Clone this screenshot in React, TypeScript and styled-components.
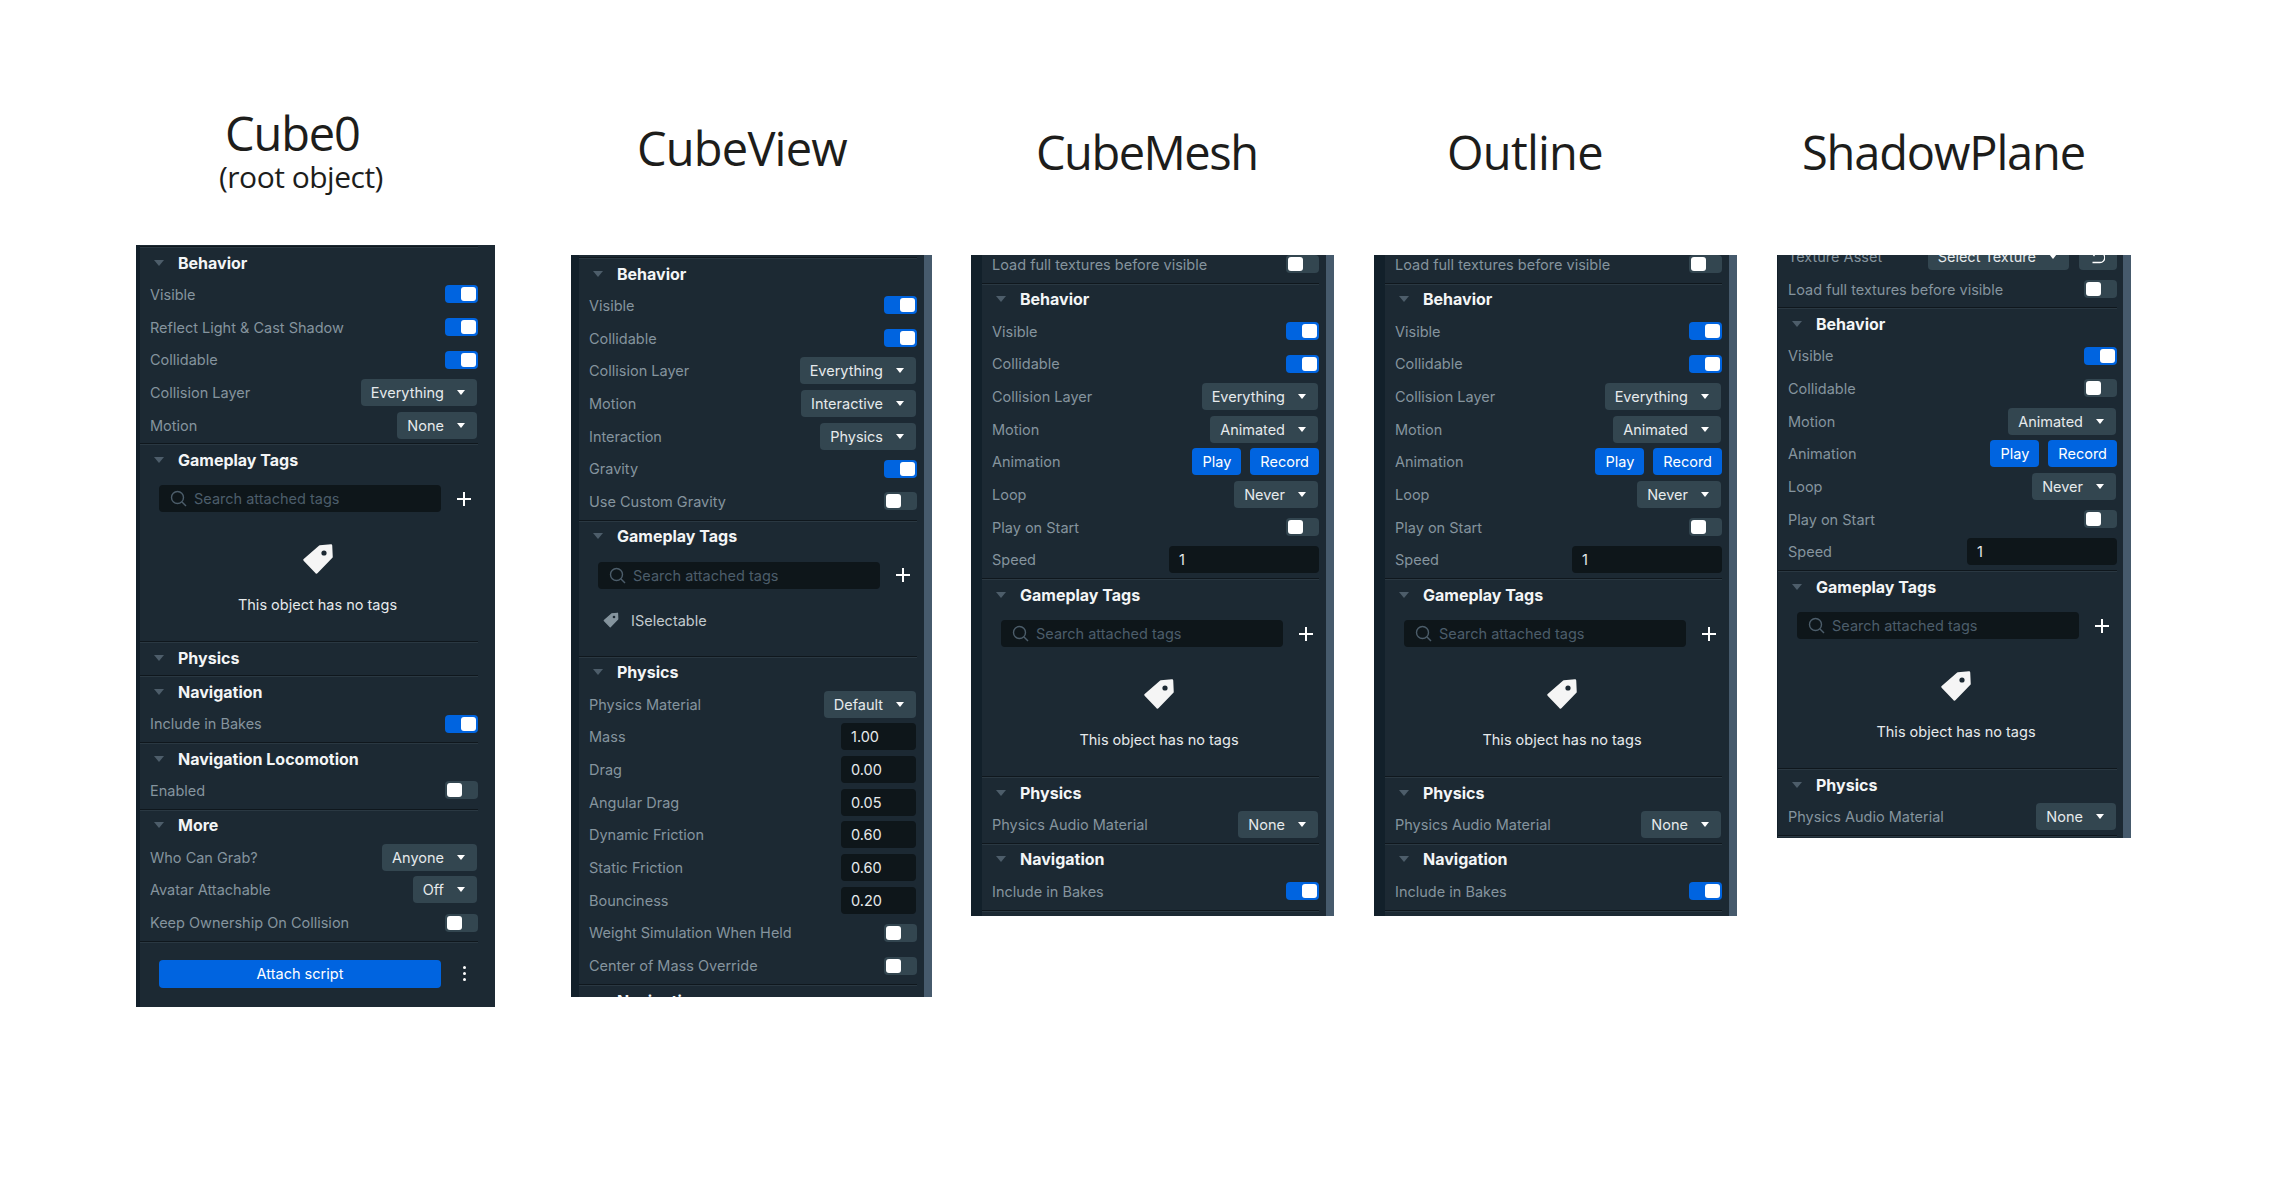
import React from "react";
import styled, { createGlobalStyle } from "styled-components";

const GlobalStyle = createGlobalStyle`
    html, body {
        margin: 0;
        background: #ffffff;
    }
    * {
        box-sizing: border-box;
    }
`;

const Page = styled.div`
    display: flex;
    align-items: flex-start;
    width: 2285px;
    height: 1191px;
    overflow: hidden;
    background: #ffffff;
    padding-left: 136px;
`;

const Column = styled.div<{ $width: number; $gap: number }>`
    width: ${(p) => p.$width}px;
    margin-left: ${(p) => p.$gap}px;
    flex: none;
`;

const TitleBlock = styled.header<{ $height: number; $top: number; $left: number }>`
    height: ${(p) => p.$height}px;
    padding-top: ${(p) => p.$top}px;
    padding-left: ${(p) => p.$left}px;
    font-family: "Open Sans", sans-serif;
    color: #1d1d1b;
    white-space: nowrap;
`;

const Title = styled.h1<{ $spacing: number }>`
    margin: 0;
    font-size: 47px;
    font-weight: 400;
    line-height: 60px;
    letter-spacing: ${(p) => p.$spacing}px;
`;

const SubTitle = styled.div`
    margin: -4px 0 0 -6px;
    font-size: 30px;
    line-height: 36px;
    letter-spacing: -0.5px;
`;

const Panel = styled.div<{ $height: number }>`
    display: flex;
    height: ${(p) => p.$height}px;
    overflow: hidden;
    background: #1c2933;
    font-family: Inter, "Liberation Sans", sans-serif;
`;

const Strip = styled.div<{ $width: number }>`
    flex: none;
    width: ${(p) => p.$width}px;
    background: #12202a;
`;

const Scrollbar = styled.div`
    flex: none;
    width: 8px;
    background: #465a6c;
`;

const Content = styled.div<{ $right: number; $scroll: number }>`
    flex: 1;
    min-width: 0;
    margin-top: ${(p) => p.$scroll}px;
    padding-right: ${(p) => p.$right}px;
`;

const Section = styled.section<{ $first?: boolean }>`
    padding: 0 0 2px 10px;
    border-top: ${(p) => (p.$first ? "0" : "1px solid #0f171d")};
    box-shadow: ${(p) => (p.$first ? "none" : "inset 0 1px 0 #2a3842")};
`;

const SectionHeader = styled.div`
    display: flex;
    align-items: center;
    height: 31px;
    padding-left: 4px;
    font-size: 16px;
    font-weight: 700;
    color: #f3f5f6;
`;

const Triangle = styled.span`
    width: 0;
    height: 0;
    margin-right: 14px;
    border-left: 5.5px solid transparent;
    border-right: 5.5px solid transparent;
    border-top: 6px solid #4d5d6a;
`;

const Row = styled.div`
    display: flex;
    align-items: center;
    justify-content: space-between;
    height: 32.7px;
    font-size: 14.5px;
    color: #85949e;
    white-space: nowrap;
`;

const ToggleTrack = styled.span<{ $on: boolean }>`
    display: flex;
    justify-content: ${(p) => (p.$on ? "flex-end" : "flex-start")};
    align-items: center;
    width: 33px;
    height: 18px;
    padding: 0 2px;
    border-radius: 4px;
    background: ${(p) => (p.$on ? "#0064e0" : "#334650")};
`;

const ToggleKnob = styled.span`
    width: 15px;
    height: 14px;
    border-radius: 3px;
    background: #ffffff;
`;

const SelectBox = styled.div`
    display: flex;
    align-items: center;
    height: 27px;
    margin-right: 1px;
    padding: 0 12px 0 10px;
    border-radius: 4px;
    background: #334650;
    color: #e6eaec;
`;

const Caret = styled.span`
    width: 0;
    height: 0;
    margin-left: 13px;
    border-left: 4px solid transparent;
    border-right: 4px solid transparent;
    border-top: 5px solid #ffffff;
`;

const NumberBox = styled.div<{ $width: number; $flush?: boolean }>`
    display: flex;
    align-items: center;
    width: ${(p) => p.$width}px;
    height: 27px;
    margin-right: ${(p) => (p.$flush ? 0 : 1)}px;
    padding-left: 10px;
    border-radius: 4px;
    background: #0e161a;
    color: #e6eaec;
`;

const ButtonPair = styled.div`
    display: flex;
    gap: 9px;
`;

const BlueButton = styled.div`
    display: flex;
    align-items: center;
    height: 27px;
    padding: 0 10px;
    border-radius: 4px;
    background: #0064e0;
    color: #ffffff;
`;

const IconBox = styled.div`
    display: flex;
    align-items: center;
    justify-content: center;
    width: 38px;
    height: 27px;
    border-radius: 4px;
    background: #334650;
    color: #ffffff;
`;

const RowControls = styled.div`
    display: flex;
    gap: 9px;
`;

const SearchRow = styled.div`
    display: flex;
    align-items: center;
    margin: 10px 0 0 9px;
`;

const SearchBox = styled.div`
    display: flex;
    align-items: center;
    gap: 7px;
    width: 282px;
    height: 27px;
    padding-left: 11px;
    border-radius: 4px;
    background: #0e161a;
    color: #4c5d6a;
    font-size: 14.5px;
`;

const PlusButton = styled.div`
    display: flex;
    margin-left: 15px;
    color: #ffffff;
`;

const EmptyTags = styled.div`
    display: flex;
    flex-direction: column;
    align-items: center;
    height: 127px;
    padding: 31px 0 0 7px;
    font-size: 14.5px;
    color: #e6eaec;
`;

const EmptyText = styled.div`
    margin-top: 21px;
    line-height: 18px;
`;

const TagRow = styled.div`
    display: flex;
    align-items: center;
    height: 65px;
    padding: 0 0 2px 14px;
    gap: 12px;
    font-size: 14.5px;
    color: #c2cace;
`;

const Footer = styled.div`
    display: flex;
    align-items: center;
    margin: 18px 0 0 9px;
`;

const AttachButton = styled.div`
    display: flex;
    align-items: center;
    justify-content: center;
    width: 282px;
    height: 28px;
    border-radius: 4px;
    background: #0064e0;
    color: #ffffff;
    font-size: 14.5px;
`;

const MoreDots = styled.div`
    display: flex;
    flex-direction: column;
    gap: 3px;
    margin-left: 22px;
    span {
        width: 3px;
        height: 3px;
        border-radius: 50%;
        background: #ffffff;
    }
`;

function SearchIcon() {
    return (
        <svg width="17" height="17" viewBox="0 0 17 17" fill="none" stroke="#4c5d6a" strokeWidth="1.4">
            <circle cx="7.5" cy="7.5" r="6" />
            <path d="M12 12l4 4" />
        </svg>
    );
}

function PlusIcon() {
    return (
        <svg width="16" height="16" viewBox="0 0 16 16" stroke="currentColor" strokeWidth="2">
            <path d="M8 1v14M1 8h14" />
        </svg>
    );
}

function UndoIcon() {
    return (
        <svg width="14" height="15" viewBox="0 0 14 15" fill="none" stroke="currentColor" strokeWidth="1.3">
            <path d="M3.5 1 L0.8 4 L3.5 7 M0.8 4 H9 A4.7 4.7 0 0 1 9 13.5 H1.5" />
        </svg>
    );
}

function TagIcon({ size, color, hole }: { size: number; color: string; hole: string }) {
    return (
        <svg width={size} height={size} viewBox="0 0 32 32">
            <path
                d="M18 3.5 L29 2.5 L29.5 14 L14.5 29.5 L2.5 17 Z"
                fill={color}
                stroke={color}
                strokeWidth="2.5"
                strokeLinejoin="round"
            />
            <circle cx="22" cy="10" r="2.6" fill={hole} />
        </svg>
    );
}

// row 종류별로 오른쪽 컨트롤만 바뀜
const Toggle = ({ label, on }: { label: string; on?: boolean }) => (
    <Row>
        {label}
        <ToggleTrack $on={!!on}>
            <ToggleKnob />
        </ToggleTrack>
    </Row>
);

const Select = ({ label, value }: { label: string; value: string }) => (
    <Row>
        {label}
        <SelectBox>
            {value}
            <Caret />
        </SelectBox>
    </Row>
);

const NumberRow = ({ label, value }: { label: string; value: string }) => (
    <Row>
        {label}
        <NumberBox $width={75}>{value}</NumberBox>
    </Row>
);

const Head = ({ title }: { title: string }) => (
    <SectionHeader>
        <Triangle />
        {title}
    </SectionHeader>
);

const TagsSearch = () => (
    <SearchRow>
        <SearchBox>
            <SearchIcon />
            Search attached tags
        </SearchBox>
        <PlusButton>
            <PlusIcon />
        </PlusButton>
    </SearchRow>
);

const NoTags = () => (
    <EmptyTags>
        <TagIcon size={32} color="#f5f5f5" hole="#1c2933" />
        <EmptyText>This object has no tags</EmptyText>
    </EmptyTags>
);

const AnimationRows = () => (
    <>
        <Row>
            Animation
            <ButtonPair>
                <BlueButton>Play</BlueButton>
                <BlueButton>Record</BlueButton>
            </ButtonPair>
        </Row>
        <Select label="Loop" value="Never" />
        <Toggle label="Play on Start" />
        <Row>
            Speed
            <NumberBox $width={150} $flush>
                1
            </NumberBox>
        </Row>
    </>
);

const MeshBody = () => (
    <>
        <Section $first>
            <Toggle label="Load full textures before visible" />
        </Section>
        <Section>
            <Head title="Behavior" />
            <Toggle label="Visible" on />
            <Toggle label="Collidable" on />
            <Select label="Collision Layer" value="Everything" />
            <Select label="Motion" value="Animated" />
            <AnimationRows />
        </Section>
        <Section>
            <Head title="Gameplay Tags" />
            <TagsSearch />
            <NoTags />
        </Section>
        <Section>
            <Head title="Physics" />
            <Select label="Physics Audio Material" value="None" />
        </Section>
        <Section>
            <Head title="Navigation" />
            <Toggle label="Include in Bakes" on />
        </Section>
        <Section />
    </>
);

export default function App() {
    return (
        <Page>
            <GlobalStyle />

            <Column $width={359} $gap={0}>
                <TitleBlock $height={245} $top={103} $left={89}>
                    <Title $spacing={-1.15}>Cube0</Title>
                    <SubTitle>(root object)</SubTitle>
                </TitleBlock>
                <Panel $height={762}>
                    <Strip $width={4} />
                    <Content $right={17} $scroll={1}>
                        <Section>
                            <Head title="Behavior" />
                            <Toggle label="Visible" on />
                            <Toggle label="Reflect Light & Cast Shadow" on />
                            <Toggle label="Collidable" on />
                            <Select label="Collision Layer" value="Everything" />
                            <Select label="Motion" value="None" />
                        </Section>
                        <Section>
                            <Head title="Gameplay Tags" />
                            <TagsSearch />
                            <NoTags />
                        </Section>
                        <Section>
                            <Head title="Physics" />
                        </Section>
                        <Section>
                            <Head title="Navigation" />
                            <Toggle label="Include in Bakes" on />
                        </Section>
                        <Section>
                            <Head title="Navigation Locomotion" />
                            <Toggle label="Enabled" />
                        </Section>
                        <Section>
                            <Head title="More" />
                            <Select label="Who Can Grab?" value="Anyone" />
                            <Select label="Avatar Attachable" value="Off" />
                            <Toggle label="Keep Ownership On Collision" />
                        </Section>
                        <Section>
                            <Footer>
                                <AttachButton>Attach script</AttachButton>
                                <MoreDots>
                                    <span />
                                    <span />
                                    <span />
                                </MoreDots>
                            </Footer>
                        </Section>
                    </Content>
                </Panel>
            </Column>

            <Column $width={361} $gap={76}>
                <TitleBlock $height={255} $top={118} $left={66}>
                    <Title $spacing={-0.8}>CubeView</Title>
                </TitleBlock>
                <Panel $height={742}>
                    <Strip $width={8} />
                    <Content $right={7} $scroll={2}>
                        <Section>
                            <Head title="Behavior" />
                            <Toggle label="Visible" on />
                            <Toggle label="Collidable" on />
                            <Select label="Collision Layer" value="Everything" />
                            <Select label="Motion" value="Interactive" />
                            <Select label="Interaction" value="Physics" />
                            <Toggle label="Gravity" on />
                            <Toggle label="Use Custom Gravity" />
                        </Section>
                        <Section>
                            <Head title="Gameplay Tags" />
                            <TagsSearch />
                            <TagRow>
                                <TagIcon size={16} color="#85949e" hole="#1c2933" />
                                ISelectable
                            </TagRow>
                        </Section>
                        <Section>
                            <Head title="Physics" />
                            <Select label="Physics Material" value="Default" />
                            <NumberRow label="Mass" value="1.00" />
                            <NumberRow label="Drag" value="0.00" />
                            <NumberRow label="Angular Drag" value="0.05" />
                            <NumberRow label="Dynamic Friction" value="0.60" />
                            <NumberRow label="Static Friction" value="0.60" />
                            <NumberRow label="Bounciness" value="0.20" />
                            <Toggle label="Weight Simulation When Held" />
                            <Toggle label="Center of Mass Override" />
                        </Section>
                        <Section>
                            <Head title="Navigation" />
                        </Section>
                    </Content>
                    <Scrollbar />
                </Panel>
            </Column>

            <Column $width={363} $gap={39}>
                <TitleBlock $height={255} $top={122} $left={65}>
                    <Title $spacing={-1.5}>CubeMesh</Title>
                </TitleBlock>
                <Panel $height={661}>
                    <Strip $width={11} />
                    <Content $right={7} $scroll={-7}>
                        <MeshBody />
                    </Content>
                    <Scrollbar />
                </Panel>
            </Column>

            <Column $width={363} $gap={40}>
                <TitleBlock $height={255} $top={122} $left={73}>
                    <Title $spacing={-0.75}>Outline</Title>
                </TitleBlock>
                <Panel $height={661}>
                    <Strip $width={11} />
                    <Content $right={7} $scroll={-7}>
                        <MeshBody />
                    </Content>
                    <Scrollbar />
                </Panel>
            </Column>

            <Column $width={354} $gap={40}>
                <TitleBlock $height={255} $top={122} $left={25}>
                    <Title $spacing={-1.15}>ShadowPlane</Title>
                </TitleBlock>
                <Panel $height={583}>
                    <Strip $width={1} />
                    <Content $right={6} $scroll={-15}>
                        <Section $first>
                            <Row>
                                Texture Asset
                                <RowControls>
                                    <SelectBox>
                                        Select Texture
                                        <Caret />
                                    </SelectBox>
                                    <IconBox>
                                        <UndoIcon />
                                    </IconBox>
                                </RowControls>
                            </Row>
                            <Toggle label="Load full textures before visible" />
                        </Section>
                        <Section>
                            <Head title="Behavior" />
                            <Toggle label="Visible" on />
                            <Toggle label="Collidable" />
                            <Select label="Motion" value="Animated" />
                            <AnimationRows />
                        </Section>
                        <Section>
                            <Head title="Gameplay Tags" />
                            <TagsSearch />
                            <NoTags />
                        </Section>
                        <Section>
                            <Head title="Physics" />
                            <Select label="Physics Audio Material" value="None" />
                        </Section>
                        <Section />
                    </Content>
                    <Scrollbar />
                </Panel>
            </Column>
        </Page>
    );
}
